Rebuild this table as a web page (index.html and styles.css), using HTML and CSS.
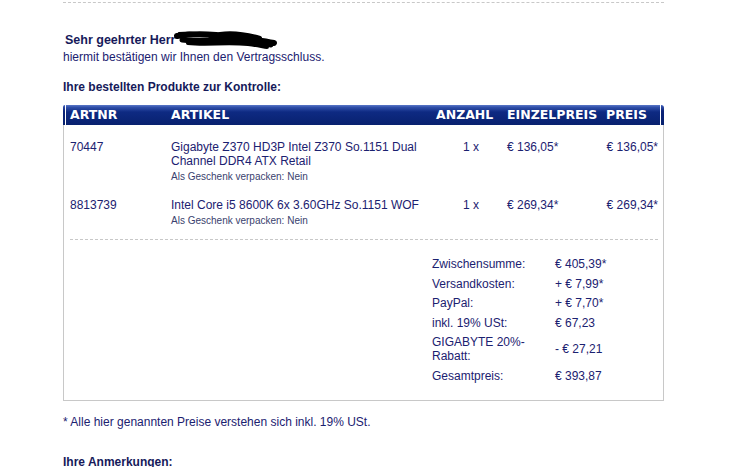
FILE: index.html
```html
<!DOCTYPE html>
<html lang="de">
<head>
    <meta charset="UTF-8">
    <meta name="viewport" content="width=device-width, initial-scale=1.0">
    <title>Bestellbestätigung</title>
    <link rel="stylesheet" href="styles.css">
</head>
<body>
    <div class="page">
        <div class="rule"></div>

        <p class="greet"><b>Sehr geehrter Herr</b><span class="redact"><svg width="104" height="20" viewBox="0 0 104 20"><path d="M3 6 C20 3 40 4 60 7 C75 9 90 11 100 13" stroke="#000" stroke-width="6" fill="none" stroke-linecap="round"/><path d="M8 10 C25 12 45 8 68 10 C80 11 90 14 97 15" stroke="#000" stroke-width="5" fill="none" stroke-linecap="round"/><path d="M14 13 C32 15 52 12 74 14 C84 15 90 17 93 17" stroke="#000" stroke-width="4" fill="none" stroke-linecap="round"/><path d="M46 4 C60 2 72 4 86 8" stroke="#000" stroke-width="4" fill="none" stroke-linecap="round"/><path d="M36 9 C50 7 64 9 80 11" stroke="#000" stroke-width="4" fill="none" stroke-linecap="round"/><path d="M5 3 C14 2 22 2 30 4" stroke="#000" stroke-width="2" fill="none" stroke-linecap="round"/></svg></span></p>
        <p class="intro">hiermit bestätigen wir Ihnen den Vertragsschluss.</p>

        <h3>Ihre bestellten Produkte zur Kontrolle:</h3>

        <div class="order">
            <div class="head">
                <div class="cap left"></div>
                <div class="bar">
                    <span>ARTNR</span>
                    <span>ARTIKEL</span>
                    <span>ANZAHL</span>
                    <span>EINZELPREIS</span>
                    <span>PREIS</span>
                </div>
                <div class="cap right"></div>
            </div>

            <div class="body">
                <div class="item">
                    <div>70447</div>
                    <div>Gigabyte Z370 HD3P Intel Z370 So.1151 Dual Channel DDR4 ATX Retail
                        <div class="gift">Als Geschenk verpacken: Nein</div>
                    </div>
                    <div class="qty">1 x</div>
                    <div>€ 136,05*</div>
                    <div class="price">€ 136,05*</div>
                </div>
                <div class="item">
                    <div>8813739</div>
                    <div>Intel Core i5 8600K 6x 3.60GHz So.1151 WOF
                        <div class="gift">Als Geschenk verpacken: Nein</div>
                    </div>
                    <div class="qty">1 x</div>
                    <div>€ 269,34*</div>
                    <div class="price">€ 269,34*</div>
                </div>

                <div class="dash"></div>

                <div class="sums">
                    <div>Zwischensumme:</div><div>€ 405,39*</div>
                    <div>Versandkosten:</div><div>+ € 7,99*</div>
                    <div>PayPal:</div><div>+ € 7,70*</div>
                    <div>inkl. 19% USt:</div><div>€ 67,23</div>
                    <div>GIGABYTE 20%-<br>Rabatt:</div><div class="mid">- € 27,21</div>
                    <div>Gesamtpreis:</div><div>€ 393,87</div>
                </div>
            </div>
        </div>

        <p class="note">* Alle hier genannten Preise verstehen sich inkl. 19% USt.</p>

        <h3 class="remarks">Ihre Anmerkungen:</h3>
    </div>
</body>
</html>
```

FILE: styles.css
```css
body {
    margin: 0;
    background-color: white;
    font-family: Arial, "Liberation Sans", sans-serif;
    font-size: 12px;
    line-height: 14px;
    color: #1b2170;
}
.page {
    margin-left: 63px;
    width: 601px;
    padding-top: 2px;
}
.rule {
    border-top: 1px dashed #c8c8c8;
}
p, h3 {
    margin: 0;
}
.greet {
    margin-top: 30px;
    height: 14px;
    padding-left: 2px;
    color: #161a5a;
    white-space: nowrap;
}
.greet b {
    font-size: 12.5px;
}
.redact {
    display: inline-block;
    vertical-align: top;
    margin-top: -3px;
    margin-left: -1px;
}
.intro {
    margin-top: 3px;
}
h3 {
    font-size: 12px;
    color: #161a5a;
    margin-top: 16px;
}

/* order table */
.order {
    margin-top: 11px;
}
.head {
    display: flex;
    height: 20px;
}
.cap {
    width: 2px;
    background: linear-gradient(#3d5cb8 0, #0b2378 30%, #06206e 100%);
}
.cap.left {
    border-top-left-radius: 2px;
    margin-right: 1px;
}
.cap.right {
    width: 3px;
    margin-left: 1px;
    border-top-right-radius: 3px;
}
.bar {
    flex: 1;
    display: grid;
    grid-template-columns: 101px 265px 71px 99px 1fr;
    padding-left: 4px;
    align-items: center;
    background: linear-gradient(#5a78c8 0, #2f4ea8 12%, #0e2a82 35%, #08216f 100%);
    color: white;
    font-family: "DejaVu Sans", Verdana, sans-serif;
    font-weight: bold;
    font-size: 12.5px;
    white-space: nowrap;
}
.body {
    border: 1px solid #c8c8c8;
    border-top: none;
    padding: 15px 5px 17px 6px;
}
.item {
    display: grid;
    grid-template-columns: 101px 265px 71px 99px 1fr;
}
.item + .item {
    margin-top: 15px;
}
.qty {
    padding-left: 27px;
}
.price {
    text-align: right;
    white-space: nowrap;
}
.gift {
    font-size: 10px;
    line-height: 12px;
    color: #3a3f6e;
    margin-top: 3px;
}
.dash {
    border-top: 1px dashed #c8c8c8;
    margin-top: 12px;
}
.sums {
    display: grid;
    grid-template-columns: 123px auto;
    row-gap: 5.6px;
    margin-left: 362px;
    margin-top: 17px;
}
.mid {
    align-self: center;
}
.note {
    margin-top: 14px;
}
.remarks {
    margin-top: 26px;
}
```
